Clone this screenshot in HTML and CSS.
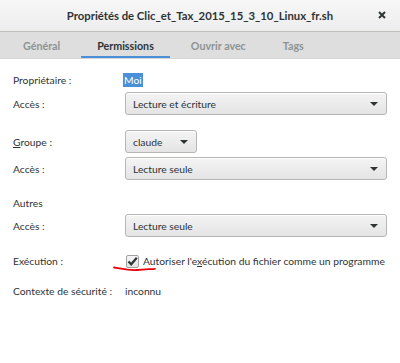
FILE: index.html
```html
<!DOCTYPE html>
<html lang="fr">
    <head>
        <link rel="stylesheet" href="styles.css">
        <title>Propriétés</title>
    </head>

    <body>
        <div id="dialog">
            <!-- Title bar -->
            <div class="titlebar">
                <span class="title">Propriétés de Clic_et_Tax_2015_15_3_10_Linux_fr.sh</span>
                <span class="close">
                    <svg width="8" height="8" viewBox="0 0 8 8">
                        <path d="M1 1 L7 7 M7 1 L1 7" stroke="#2e3436" stroke-width="2"/>
                    </svg>
                </span>
            </div>

            <!-- Notebook tabs -->
            <div class="tabs">
                <span class="tab">Général</span>
                <span class="tab active">Permissions</span>
                <span class="tab">Ouvrir avec</span>
                <span class="tab">Tags</span>
            </div>

            <div class="page">
                <div class="row r-owner">
                    <span class="label">Propriétaire :</span>
                    <span class="owner">Moi</span>
                </div>
                <div class="row r-combo r-gap5">
                    <span class="label">Accès :</span>
                    <div class="combo wide"><span>Lecture et écriture</span><i class="arrow"></i></div>
                </div>
                <div class="row r-combo r-gap15">
                    <span class="label"><u>G</u>roupe :</span>
                    <div class="combo small"><span>claude</span><i class="arrow"></i></div>
                </div>
                <div class="row r-combo r-gap4">
                    <span class="label">Accès :</span>
                    <div class="combo wide"><span>Lecture seule</span><i class="arrow"></i></div>
                </div>
                <div class="row r-text r-gap16">
                    <span class="label">Autres</span>
                </div>
                <div class="row r-combo r-gap4">
                    <span class="label">Accès :</span>
                    <div class="combo wide"><span>Lecture seule</span><i class="arrow"></i></div>
                </div>
                <div class="row r-text r-gap17">
                    <span class="label">Exécution :</span>
                    <label class="check">
                        <span class="box">
                            <svg width="11" height="11" viewBox="0 0 11 11">
                                <path d="M1.5 5.5 L4.2 8.3 L9.8 1.8" fill="none" stroke="#2e3436" stroke-width="2.2"/>
                            </svg>
                        </span>
                        <span class="check-text">Autoriser l'e<u>x</u>écution du fichier comme un programme</span>
                    </label>
                    <!-- red hand-drawn mark -->
                    <svg class="scribble" width="44" height="8" viewBox="0 0 44 8">
                        <path d="M1 2.5 C 8 3.5, 14 5.5, 24 5 C 32 4.6, 38 4, 42 3.8" fill="none" stroke="#e8000b" stroke-width="1.8" stroke-linecap="round"/>
                    </svg>
                </div>
                <div class="row r-text r-gap16">
                    <span class="label">Contexte de sécurité :</span>
                    <span>inconnu</span>
                </div>
            </div>
        </div>
    </body>
</html>
```

FILE: styles.css
```css
* {
    box-sizing: border-box;
    margin: 0;
    padding: 0;
}
html,
body {
    height: 100%;
    background: #fff;
}
body {
    font-family: Lato, 'Open Sans', sans-serif;
    font-size: 10.3px;
    color: #2e3436;
}
#dialog {
    width: 400px;
    height: 363px;
    background: #fff;
}
.titlebar {
    height: 32px;
    display: flex;
    align-items: center;
    justify-content: center;
    position: relative;
    background: linear-gradient(#f7f7f7, #ededed);
    border-bottom: 1px solid #bfbfbc;
}
.titlebar .title {
    font-weight: 700;
    font-size: 11.3px;
    color: #2e3436;
}
.titlebar .close {
    position: absolute;
    right: 14px;
    top: 11px;
    line-height: 0;
}
.tabs {
    height: 27px;
    display: flex;
    gap: 5px;
    padding-left: 7px;
    background: #dedede;
    border-bottom: 1px solid #d6d6d6;
}
.tab {
    display: flex;
    align-items: center;
    padding: 0 16px;
    font-weight: 700;
    font-size: 10.7px;
    color: #8f9393;
    border-bottom: 2px solid transparent;
    padding-top: 2px;
}
.tab.active {
    color: #2e3436;
    border-bottom-color: #4a90d9;
}
.page {
    padding: 14px 13px 0 13px;
}
.row {
    display: flex;
    align-items: center;
    position: relative;
}
.row .label {
    width: 112px;
    flex: none;
}
.r-owner,
.r-text {
    height: 14px;
}
.r-combo {
    height: 23px;
}
.r-gap4 { margin-top: 4px; }
.r-gap5 { margin-top: 5px; }
.r-gap15 { margin-top: 15px; }
.r-gap16 { margin-top: 16px; }
.r-gap17 { margin-top: 17px; }
.owner {
    background: #4a90d9;
    color: #fff;
    padding: 0 1px;
    line-height: 14px;
    margin-left: -2px;
}
.combo {
    height: 23px;
    display: flex;
    align-items: center;
    justify-content: space-between;
    padding: 0 7px;
    border: 1px solid #b6b6b3;
    border-radius: 3px;
    background: linear-gradient(#f4f4f4, #e4e4e4);
    box-shadow: inset 0 1px #fff;
}
.combo.wide {
    width: 262px;
}
.combo.small {
    width: 72px;
}
.arrow {
    width: 0;
    height: 0;
    border-left: 4px solid transparent;
    border-right: 4px solid transparent;
    border-top: 4px solid #2e3436;
    margin-right: 1px;
}
.check {
    display: flex;
    align-items: center;
    gap: 4px;
    margin-left: 1px;
}
.check-text {
    white-space: nowrap;
}
.check .box {
    width: 13px;
    height: 13px;
    border: 1px solid #a1a1a1;
    border-radius: 2px;
    background: linear-gradient(#f6f6f6, #e2e2e2);
    display: flex;
    align-items: center;
    justify-content: center;
}
.scribble {
    position: absolute;
    left: 100px;
    top: 11px;
}
```
